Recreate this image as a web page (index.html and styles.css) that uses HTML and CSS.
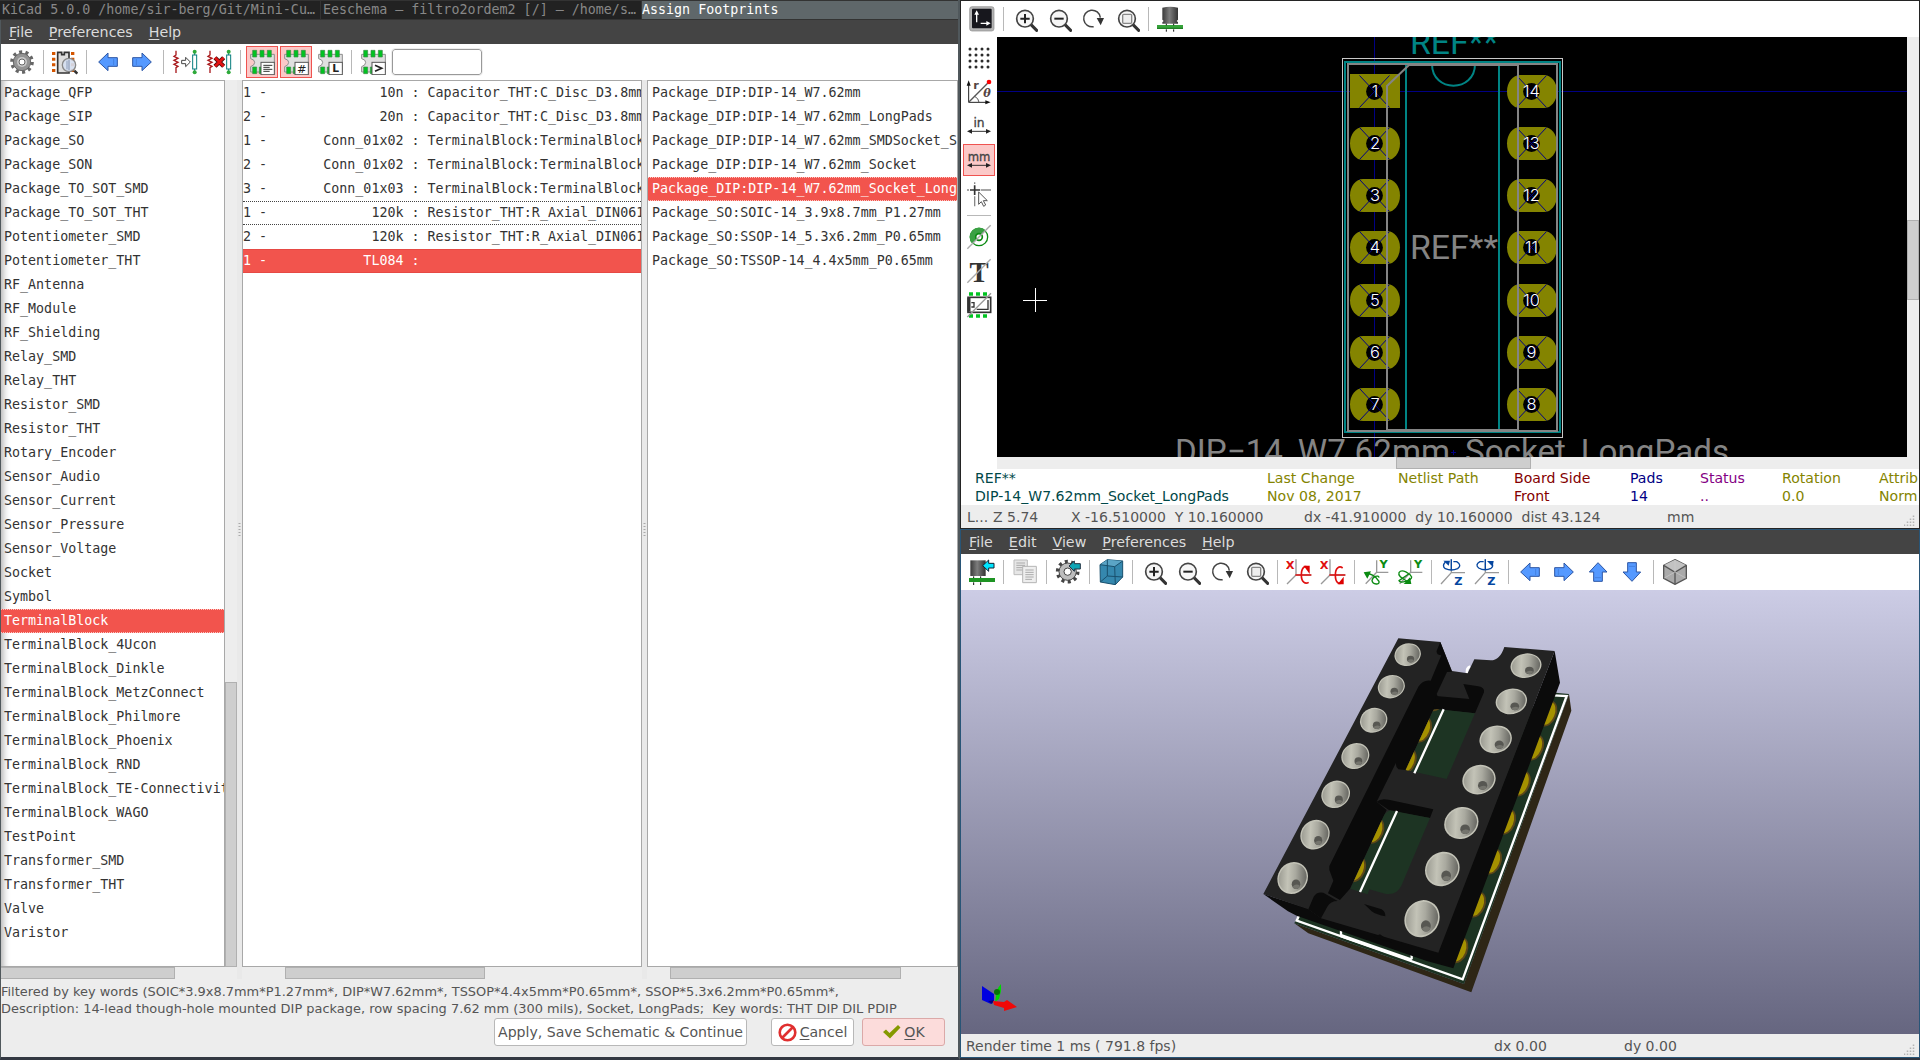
FILE: index.html
```html
<!DOCTYPE html>
<html lang="en">
<head>
<meta charset="utf-8">
<title>Assign Footprints</title>
<link rel="stylesheet" href="styles.css">
</head>
<body>
<svg class="defs" width="0" height="0">
  <defs>
    <symbol id="zoom-in" viewBox="156 19 78 78"><path d="M213 75L230 92" stroke="#333" stroke-width="9" stroke-linecap="round"/><circle cx="195" cy="57" r="25" fill="#f6f6f6" stroke="#444" stroke-width="5"/><path d="M195 43V71M181 57H209" stroke="#222" stroke-width="6"/></symbol>
    <symbol id="zoom-out" viewBox="156 19 78 78"><path d="M213 75L230 92" stroke="#333" stroke-width="9" stroke-linecap="round"/><circle cx="195" cy="57" r="25" fill="#f6f6f6" stroke="#444" stroke-width="5"/><path d="M181 57H209" stroke="#222" stroke-width="6"/></symbol>
    <symbol id="zoom-fit" viewBox="156 19 78 78"><path d="M213 75L230 92" stroke="#333" stroke-width="9" stroke-linecap="round"/><circle cx="195" cy="57" r="25" fill="#f6f6f6" stroke="#444" stroke-width="5"/><rect x="182" y="44" width="27" height="27" rx="3" fill="#eee" stroke="#888" stroke-width="4"/></symbol>
    <symbol id="redraw" viewBox="360 19 78 78"><path d="M401 81A25 25 0 1 1 421 54" fill="none" stroke="#444" stroke-width="4.5"/><path d="M410 55H432L422 77Z" fill="#333"/></symbol>
    <symbol id="arrow" viewBox="286 147 78 78"><path d="M297 186L325 159V173H353V199H325V212Z" fill="#59f" stroke="#2c56a5" stroke-width="3"/><path d="M342 177V195" stroke="#4480e0" stroke-width="3"/></symbol>
    <symbol id="board" viewBox="747 147 78 78">
      <path d="M752 163H823V216H752V200Q764 196 764 187Q764 179 752 176Z" fill="#e0e0e0" stroke="#8d8d8d" stroke-width="3"/>
      <path d="M758 151H770V171H758ZM780 151H792V171H780ZM802 151H814V171H802ZM758 201H770V221H758ZM778 201H790V221H778Z" fill="#00c321" stroke="#3f8a48" stroke-width="2"/>
      <rect x="783" y="187" width="40" height="37" fill="#fff" stroke="#555" stroke-width="3"/>
    </symbol>
    <symbol id="resistor" viewBox="516 147 78 78">
      <path d="M528 152V165L522 169L534 175L522 181L534 187L522 193L534 199L528 203V219" fill="none" stroke="#a8181b" stroke-width="4"/>
      <path d="M584 155V218" stroke="#067d7d" stroke-width="3"/><rect x="578" y="165" width="12" height="42" fill="#fff" stroke="#067d7d" stroke-width="3"/>
      <circle cx="584" cy="155" r="6" fill="#2faa3a"/><circle cx="584" cy="217" r="6" fill="#2faa3a"/>
    </symbol>
    <linearGradient id="cyl"><stop offset="0" stop-color="#3a3a3a"/><stop offset=".45" stop-color="#7d7d7d"/><stop offset="1" stop-color="#333"/></linearGradient>
    <symbol id="part3d" viewBox="591 19 78 78"><path d="M607 24Q630 18 654 24V60L650 64L654 68V72H607V68L611 64L607 60Z" fill="url(#cyl)"/><path d="M591 76H669V87H591Z" fill="#35a33a"/><path d="M591 86H669" stroke="#0f7214" stroke-width="3"/><path d="M619 72V77M641 72V77M619 89V96M641 89V96" stroke="#111" stroke-width="3"/></symbol>
    <linearGradient id="coneShade" x1="0" y1=".25" x2="1" y2=".7"><stop offset="0" stop-color="#96968d"/><stop offset=".35" stop-color="#c3c3b7"/><stop offset=".6" stop-color="#a9a99f"/><stop offset="1" stop-color="#62625d"/></linearGradient>
    <g id="cone"><ellipse rx="51" ry="45" transform="rotate(-25)" fill="#c3c3b7"/><ellipse rx="46.500" ry="40.500" transform="rotate(-25)" fill="url(#coneShade)"/><ellipse cx="11" cy="18" rx="14" ry="14" fill="#575752"/><path d="M-1 25A14 14 0 0 0 24 23Q12 14 -1 25Z" fill="#74746d"/></g>
    <g id="pad3d"><ellipse rx="28" ry="41" transform="rotate(22)" fill="#5d4719"/><ellipse rx="22" ry="36" transform="rotate(22)" fill="#a59100"/></g>
    <g id="pad"><rect x="-25" y="-16.5" width="50" height="33" rx="13" ry="16.5"/></g>
    <g id="padmark"><circle r="8.4" fill="#000"/><path d="M-15 -16L15 16M15 -16L-15 16" stroke="#000084"/></g>
  </defs>
</svg>
<div class="desktop">
  <section class="window assign">
    <div class="tabs"><div>KiCad 5.0.0 /home/sir-berg/Git/Mini-Cu…</div><div>Eeschema – filtro2ordem2 [/] – /home/s…</div><div class="active">Assign Footprints</div></div>
    <nav class="menubar"><span><u>F</u>ile</span><span><u>P</u>references</span><span><u>H</u>elp</span></nav>
    <div class="toolbar">
      <button><svg viewBox="27 147 78 78"><circle cx="66" cy="186" r="30" fill="none" stroke="#666" stroke-width="11" stroke-dasharray="9 9.85"/><circle cx="66" cy="186" r="26" fill="#949494" stroke="#666" stroke-width="3"/><circle cx="66" cy="186" r="15" fill="#c9c9c9"/><circle cx="66" cy="186" r="9" fill="#fff" stroke="#666" stroke-width="3"/></svg></button>
      <i></i>
      <button><svg viewBox="155 147 78 78"><path d="M160 156V216M217 156V216" stroke="#d45500" stroke-width="10" stroke-dasharray="9 8"/><path d="M172 157H184V164H192V157H206V219H172Z" fill="#ddd" stroke="#333" stroke-width="5"/><path d="M222 212L231 221" stroke="#333" stroke-width="8"/><circle cx="206" cy="195" r="20" fill="#d5dfef" fill-opacity=".9" stroke="#888" stroke-width="4"/><path d="M206 180V210M200 182V208" stroke="#8c9dba" stroke-width="3"/></svg></button>
      <i></i>
      <button><svg><use href="#arrow"/></svg></button>
      <button><svg class="flip"><use href="#arrow"/></svg></button>
      <i></i>
      <button><svg viewBox="516 147 78 78"><use href="#resistor" x="516" y="147" width="78" height="78"/><path d="M545 181H557V172L571 186L557 200V191H545Z" fill="#fff" stroke="#444" stroke-width="3"/></svg></button>
      <button><svg viewBox="516 147 78 78"><use href="#resistor" x="516" y="147" width="78" height="78"/><path d="M543 173L569 199M569 173L543 199" stroke="#520d0d" stroke-width="13"/><path d="M543 173L569 199M569 173L543 199" stroke="#e31313" stroke-width="8"/></svg></button>
      <i></i>
      <button class="on"><svg viewBox="747 147 78 78"><use href="#board" x="747" y="147" width="78" height="78"/><path d="M790 196H817M790 202H809M790 208H817M790 214H809" stroke="#333" stroke-width="3"/></svg></button>
      <button class="on"><svg viewBox="747 147 78 78"><use href="#board" x="747" y="147" width="78" height="78"/><text x="803" y="218" class="glyph">#</text></svg></button>
      <button><svg viewBox="747 147 78 78"><use href="#board" x="747" y="147" width="78" height="78"/><text x="803" y="217" class="glyph b">L</text></svg></button>
      <i></i>
      <button><svg viewBox="747 147 78 78"><use href="#board" x="747" y="147" width="78" height="78"/><path d="M792 196L812 205L792 214" fill="none" stroke="#222" stroke-width="5"/></svg></button>
      <input class="filter" aria-label="Filter">
    </div>
    <div class="panes">
      <div class="pane libs">
        <div class="list">
          <p>Package_QFP</p><p>Package_SIP</p><p>Package_SO</p><p>Package_SON</p><p>Package_TO_SOT_SMD</p><p>Package_TO_SOT_THT</p><p>Potentiometer_SMD</p><p>Potentiometer_THT</p><p>RF_Antenna</p><p>RF_Module</p><p>RF_Shielding</p><p>Relay_SMD</p><p>Relay_THT</p><p>Resistor_SMD</p><p>Resistor_THT</p><p>Rotary_Encoder</p><p>Sensor_Audio</p><p>Sensor_Current</p><p>Sensor_Pressure</p><p>Sensor_Voltage</p><p>Socket</p><p>Symbol</p><p class="sel dots">TerminalBlock</p><p>TerminalBlock_4Ucon</p><p>TerminalBlock_Dinkle</p><p>TerminalBlock_MetzConnect</p><p>TerminalBlock_Philmore</p><p>TerminalBlock_Phoenix</p><p>TerminalBlock_RND</p><p>TerminalBlock_TE-Connectivit</p><p>TerminalBlock_WAGO</p><p>TestPoint</p><p>Transformer_SMD</p><p>Transformer_THT</p><p>Valve</p><p>Varistor</p>
        </div>
        <div class="vscroll"><b></b></div>
        <div class="hscroll"><b></b></div>
      </div>
      <div class="sash"><svg width="3" height="14"><path d="M1.500 0V14" stroke="#aaa" stroke-width="2" stroke-dasharray="1 2"/></svg></div>
      <div class="pane parts">
        <div class="list">
          <p>1 -              10n : Capacitor_THT:C_Disc_D3.8mm</p><p>2 -              20n : Capacitor_THT:C_Disc_D3.8mm</p><p>1 -       Conn_01x02 : TerminalBlock:TerminalBlock</p><p>2 -       Conn_01x02 : TerminalBlock:TerminalBlock</p><p>3 -       Conn_01x03 : TerminalBlock:TerminalBlock</p><p class="dots">1 -             120k : Resistor_THT:R_Axial_DIN061</p><p>2 -             120k : Resistor_THT:R_Axial_DIN061</p><p class="sel">1 -            TL084 : </p>
        </div>
        <div class="hscroll"><b></b></div>
      </div>
      <div class="sash"><svg width="3" height="14"><path d="M1.500 0V14" stroke="#aaa" stroke-width="2" stroke-dasharray="1 2"/></svg></div>
      <div class="pane prints">
        <div class="list">
          <p>Package_DIP:DIP-14_W7.62mm</p><p>Package_DIP:DIP-14_W7.62mm_LongPads</p><p>Package_DIP:DIP-14_W7.62mm_SMDSocket_Sm</p><p>Package_DIP:DIP-14_W7.62mm_Socket</p><p class="sel dots">Package_DIP:DIP-14_W7.62mm_Socket_LongP</p><p>Package_SO:SOIC-14_3.9x8.7mm_P1.27mm</p><p>Package_SO:SSOP-14_5.3x6.2mm_P0.65mm</p><p>Package_SO:TSSOP-14_4.4x5mm_P0.65mm</p>
        </div>
        <div class="hscroll"><b></b></div>
      </div>
    </div>
    <div class="notes"><p>Filtered by key words (SOIC*3.9x8.7mm*P1.27mm*, DIP*W7.62mm*, TSSOP*4.4x5mm*P0.65mm*, SSOP*5.3x6.2mm*P0.65mm*,</p><p>Description: 14-lead though-hole mounted DIP package, row spacing 7.62 mm (300 mils), Socket, LongPads;&nbsp; Key words: THT DIP DIL PDIP</p></div>
    <div class="actions">
      <button class="apply">Apply, Save Schematic &amp; Continue</button>
      <button class="cancel"><svg width="19" height="19" viewBox="0 0 19 19"><circle cx="9.5" cy="9.5" r="7.8" fill="#fff" stroke="#e02f2f" stroke-width="2.6"/><path d="M4.5 14.5L14.5 4.5" stroke="#e02f2f" stroke-width="2.6"/></svg><span><u>C</u>ancel</span></button>
      <button class="ok"><svg width="19" height="16" viewBox="0 0 19 16"><path d="M1 8L4 5.5L7.5 9L16 1L18.5 3.5L8 14.5Z" fill="#859900"/></svg><span><u>O</u>K</span></button>
    </div>
  </section>

  <div class="right">
    <section class="window viewer">
      <div class="toolbar">
        <button><svg viewBox="27 19 78 78"><rect x="29" y="21" width="73" height="73" rx="7" fill="#b4b4b4" stroke="#8d8d8d" stroke-width="2"/><rect x="36" y="27" width="59" height="59" rx="3" fill="#17171d"/><path d="M50 68V42M62 71H82" stroke="#fff" stroke-width="4"/><path d="M43 45L50 32L57 45ZM79 64L92 71L79 78Z" fill="#fff"/></svg></button>
        <i></i>
        <button><svg><use href="#zoom-in"/></svg></button><button><svg><use href="#zoom-out"/></svg></button><button><svg><use href="#redraw"/></svg></button><button><svg><use href="#zoom-fit"/></svg></button>
        <i></i>
        <button><svg><use href="#part3d"/></svg></button>
      </div>
      <div class="work">
        <div class="sidebar">
          <button><svg viewBox="18 135 78 78"><path d="M30 147H90M30 165H90M30 183H90M30 201H90" stroke="#2b2b2b" stroke-width="9" stroke-linecap="round" stroke-dasharray="0 18"/></svg></button>
          <button><svg viewBox="18 237 78 78"><path d="M26 307V252M26 307H80" stroke="#222" stroke-width="3"/><path d="M20 257L26 241L32 257ZM76 301L92 307L76 313Z" fill="#111"/><path d="M26 307L86 247" stroke="#555" stroke-width="4"/><path d="M44 289Q56 295 57 307" fill="none" stroke="#555" stroke-width="3"/><circle cx="87" cy="246" r="7" fill="#f00"/><text x="48" y="266" class="glyph polar">r</text><text x="81" y="291" class="glyph theta">θ</text></svg></button>
          <button><svg viewBox="18 339 78 78"><text x="57" y="382" class="glyph unit">in</text><path d="M30 394H84" stroke="#333" stroke-width="3"/><path d="M21 394L36 387V401ZM93 394L78 387V401Z" fill="#222"/></svg></button>
          <button class="on"><svg viewBox="18 441 78 78"><text x="57" y="483" class="glyph unit" textLength="68" lengthAdjust="spacingAndGlyphs">mm</text><path d="M30 496H84" stroke="#333" stroke-width="3"/><path d="M21 496L36 489V503ZM93 496L78 489V503Z" fill="#222"/></svg></button>
          <button><svg viewBox="18 543 78 78"><path d="M21 570H27M62 570H93M44 547V552M44 589V619" stroke="#888" stroke-width="4"/><path d="M30 570H60M44 556V585" stroke="#333" stroke-width="5"/><path d="M56 576V613L64 605L71 619L77 615L70 602H82Z" fill="#fff" stroke="#555" stroke-width="3"/></svg></button>
          <i></i>
          <button><svg viewBox="18 672 78 78"><circle cx="57" cy="711" r="26" fill="#fff" stroke="#0b8a12" stroke-width="4"/><path d="M37 731A28 28 0 0 1 77 691Z" fill="#3aa043"/><circle cx="57" cy="711" r="10" fill="#fff" stroke="#0b8a12" stroke-width="5"/><path d="M22 746L92 676" stroke="#aaa" stroke-width="4"/></svg></button>
          <button><svg viewBox="18 774 78 78"><text x="57" y="846" class="glyph tee">T</text><path d="M22 848L92 778" stroke="#aaa" stroke-width="4"/></svg></button>
          <button><svg viewBox="18 876 78 78"><path d="M27 882H84M27 948H84" stroke="#00c321" stroke-width="11" stroke-dasharray="12 9"/><rect x="24" y="892" width="68" height="45" fill="#fff" stroke="#333" stroke-width="5"/><path d="M27 894V935" stroke="#333" stroke-width="9"/><path d="M34 908H42V921H34M84 900V928H50" fill="none" stroke="#333" stroke-width="4"/><path d="M22 951L93 880" stroke="#999" stroke-width="4"/></svg></button>
        </div>
        <div class="canvas-wrap">
          <svg class="pcb" viewBox="997 37 910 420">
            <path d="M997 91.5H1907M1374.5 37V457" stroke="#000084"/>
            <g fill="#848400"><path d="M1350 74H1400V108H1350Z"/>
              <use href="#pad" x="1375" y="143.5"/><use href="#pad" x="1375" y="195.5"/><use href="#pad" x="1375" y="247.5"/><use href="#pad" x="1375" y="300.5"/><use href="#pad" x="1375" y="352.5"/><use href="#pad" x="1375" y="404.5"/>
              <use href="#pad" x="1532" y="91.5"/><use href="#pad" x="1532" y="143.5"/><use href="#pad" x="1532" y="195.5"/><use href="#pad" x="1532" y="247.5"/><use href="#pad" x="1532" y="300.5"/><use href="#pad" x="1532" y="352.5"/><use href="#pad" x="1532" y="404.5"/></g>
            <use href="#padmark" x="1374.5" y="91.5"/><use href="#padmark" x="1374.5" y="143.5"/><use href="#padmark" x="1374.5" y="195.5"/><use href="#padmark" x="1374.5" y="247.5"/><use href="#padmark" x="1374.5" y="300.5"/><use href="#padmark" x="1374.5" y="352.5"/><use href="#padmark" x="1374.5" y="404.5"/>
            <use href="#padmark" x="1531.5" y="91.5"/><use href="#padmark" x="1531.5" y="143.5"/><use href="#padmark" x="1531.5" y="195.5"/><use href="#padmark" x="1531.5" y="247.5"/><use href="#padmark" x="1531.5" y="300.5"/><use href="#padmark" x="1531.5" y="352.5"/><use href="#padmark" x="1531.5" y="404.5"/>
            <rect x="1342.5" y="58.5" width="220" height="379" fill="none" stroke="#c8c8c8"/>
            <g fill="none" stroke="#008484" stroke-width="2"><path d="M1345 62H1560V432H1345ZM1406 65V429M1499 65V429M1432 64C1432 93 1475 93 1475 64"/></g>
            <g fill="none" stroke="#848484" stroke-width="2"><path d="M1348 64H1557V431H1348ZM1387 430V86L1409 65H1518V430Z"/></g>
            <g class="stroke-text"><text x="1410" y="259" textLength="88" lengthAdjust="spacingAndGlyphs">REF**</text><text x="1410" y="54" class="teal" textLength="88" lengthAdjust="spacingAndGlyphs">REF**</text><text x="1175" y="463" textLength="554" lengthAdjust="spacingAndGlyphs">DIP−14_W7.62mm_Socket_LongPads</text></g>
            <g class="pad-text"><text x="1375" y="97">1</text><text x="1375" y="149">2</text><text x="1375" y="201">3</text><text x="1375" y="253">4</text><text x="1375" y="306">5</text><text x="1375" y="358">6</text><text x="1375" y="410">7</text><text x="1531.5" y="410">8</text><text x="1531.5" y="358">9</text><text x="1531.5" y="306">10</text><text x="1531.5" y="253">11</text><text x="1531.5" y="201">12</text><text x="1531.5" y="149">13</text><text x="1531.5" y="97">14</text></g>
            <path d="M1023 300.5H1047M1035.5 288V312" stroke="#fff"/><path d="M1451 452.5H1456M1453.5 450V455" stroke="#000084"/>
          </svg>
          <div class="vscroll"><b></b></div>
          <div class="hscroll"><b></b></div>
        </div>
      </div>
      <dl class="message">
        <div class="dk"><dt>REF**</dt><dd>DIP-14_W7.62mm_Socket_LongPads</dd></div><div><dt>Last Change</dt><dd>Nov 08, 2017</dd></div><div><dt>Netlist Path</dt></div><div class="rd"><dt>Board Side</dt><dd>Front</dd></div><div class="bl"><dt>Pads</dt><dd>14</dd></div><div class="mg"><dt>Status</dt><dd>..</dd></div><div><dt>Rotation</dt><dd>0.0</dd></div><div><dt>Attrib</dt><dd>Norm</dd></div>
      </dl>
      <footer class="status coords"><span>L...</span><span>Z 5.74</span><span>X -16.510000&nbsp; Y 10.160000</span><span>dx -41.910000&nbsp; dy 10.160000&nbsp; dist 43.124</span><span>mm</span><svg class="grip" width="12" height="12"><use href="#grip"/></svg></footer>
    </section>

    <section class="window view3d">
      <nav class="menubar"><span><u>F</u>ile</span><span><u>E</u>dit</span><span><u>V</u>iew</span><span><u>P</u>references</span><span><u>H</u>elp</span></nav>
      <div class="toolbar">
        <button><svg viewBox="27 387 78 78"><path d="M31 391H77V438H31Z" fill="url(#cyl)"/><path d="M27 444H105V456H27Z" fill="#1e9423"/><path d="M41 439V444M62 439V444M41 457V465M62 457V465" stroke="#111" stroke-width="3"/><path d="M68 407L86 390V400H102V414H86V424Z" fill="#00e5ff" stroke="#123" stroke-width="3"/></svg></button>
        <i></i>
        <button><svg viewBox="156 387 78 78"><path d="M162 390H202V434H162Z" fill="#e6e6e6" stroke="#bbb" stroke-width="3"/><path d="M169 399H195M169 406H195M169 413H195M169 420H190" stroke="#aaa" stroke-width="3"/><path d="M188 409H229V458H188Z" fill="#eee" stroke="#b5b5b5" stroke-width="3"/><path d="M196 420H221M196 427H221M196 434H221M196 441H221M196 448H216" stroke="#aaa" stroke-width="3"/></svg></button>
        <i></i>
        <button><svg viewBox="285 387 78 78"><circle cx="323" cy="425" r="30" fill="none" stroke="#444" stroke-width="11" stroke-dasharray="9 9.85"/><circle cx="323" cy="425" r="26" fill="#bdbdbd" stroke="#444" stroke-width="3"/><circle cx="323" cy="425" r="11" fill="#fff" stroke="#444" stroke-width="3"/><path d="M327 408L343 393V401H361V417H343V424Z" fill="#0fa5b5" stroke="#234" stroke-width="3"/></svg></button>
        <i></i>
        <button><svg viewBox="414 387 78 78"><path d="M420 404L442 389L488 393V441L466 464L421 456Z" fill="#3588ae" stroke="#19506d" stroke-width="3"/><path d="M420 404L464 410L488 393L442 389Z" fill="#5ba5c6"/><path d="M420 404L464 410L488 393M464 410L466 464M442 389V438L421 456M442 438L488 441" fill="none" stroke="#19506d" stroke-width="3"/></svg></button>
        <i></i>
        <button><svg><use href="#zoom-in"/></svg></button><button><svg><use href="#zoom-out"/></svg></button><button><svg><use href="#redraw"/></svg></button><button><svg><use href="#zoom-fit"/></svg></button>
        <i></i>
        <button><svg viewBox="978 387 78 78"><path d="M1008 388V435H1054M1008 435L981 462" fill="none" stroke="#999" stroke-width="4"/><text x="990" y="418" class="glyph axis red">X</text><path d="M1006 435H1054M1046 457C1036 464 1024 456 1024 435C1024 414 1034 404 1044 413" fill="none" stroke="#e01010" stroke-width="5"/><path d="M1031 407H1049V432Z" fill="#d00"/></svg></button>
        <button><svg viewBox="978 387 78 78"><path d="M1008 388V435H1054M1008 435L981 462" fill="none" stroke="#999" stroke-width="4"/><text x="990" y="418" class="glyph axis red">X</text><path d="M1006 435H1054M1046 414C1036 406 1024 414 1024 435C1024 456 1034 466 1044 457" fill="none" stroke="#e01010" stroke-width="5"/><path d="M1031 463H1049V440Z" fill="#d00"/></svg></button>
        <i></i>
        <button><svg viewBox="1209 387 78 78"><path d="M1250 391V427H1285M1250 427L1217 461" fill="none" stroke="#999" stroke-width="4"/><text x="1271" y="415" class="glyph axis green">Y</text><path d="M1216 432C1226 426 1250 440 1257 454C1260 466 1238 464 1236 452C1238 438 1256 434 1257 443" fill="none" stroke="#0b8b12" stroke-width="4"/><path d="M1211 427L1233 424L1222 446Z" fill="#0b8b12"/></svg></button>
        <button><svg viewBox="1311 387 78 78"><path d="M1352 391V427H1387M1352 427L1319 461" fill="none" stroke="#999" stroke-width="4"/><text x="1374" y="415" class="glyph axis green">Y</text><path d="M1348 458C1334 448 1312 440 1317 428C1326 414 1350 432 1355 441C1355 452 1318 462 1317 452L1346 432" fill="none" stroke="#0b8b12" stroke-width="4"/><path d="M1331 462L1354 462L1350 442Z" fill="#0b8b12"/></svg></button>
        <i></i>
        <button><svg viewBox="0 387 78 78"><path d="M34 388V428H75M34 428L3 462" fill="none" stroke="#999" stroke-width="4"/><path d="M34 388V420" stroke="#0546a0" stroke-width="4"/><text x="55" y="464" class="glyph axis blue">Z</text><path d="M16 396Q5 408 16 416Q34 424 53 416Q67 406 50 395H40" fill="none" stroke="#0546a0" stroke-width="4"/><path d="M10 392H30L26 407Z" fill="#0546a0"/></svg></button>
        <button><svg viewBox="102 387 78 78"><path d="M136 388V428H177M136 428L105 462" fill="none" stroke="#999" stroke-width="4"/><path d="M136 388V420" stroke="#0546a0" stroke-width="4"/><text x="154" y="464" class="glyph axis blue">Z</text><path d="M131 395H120Q104 404 116 414Q134 424 153 415Q162 408 155 400" fill="none" stroke="#0546a0" stroke-width="4"/><path d="M141 393H161L158 410Z" fill="#0546a0"/></svg></button>
        <i></i>
        <button><svg><use href="#arrow"/></svg></button><button><svg class="flip"><use href="#arrow"/></svg></button><button><svg class="up"><use href="#arrow"/></svg></button><button><svg class="down"><use href="#arrow"/></svg></button>
        <i></i>
        <button><svg viewBox="666 387 78 78"><path d="M705 389L739 406V445L705 463L671 445V406Z" fill="#aaa" stroke="#555" stroke-width="4"/><path d="M705 389L739 406L705 427L671 406Z" fill="#c2c2c2"/><path d="M671 406L705 427L739 406M705 427V463" fill="none" stroke="#555" stroke-width="4"/><path d="M705 391V426L673 444M705 426L737 444" fill="none" stroke="#ccc" stroke-width="2"/></svg></button>
      </div>
      <svg class="scene" viewBox="961 590 958 444">
        <defs><g id="grip"><path d="M9.500 .5V12M6.500 3.500V12M3.500 6.500V12M.5 9.500V12" stroke="#b4b4b4" stroke-width="1.500" stroke-dasharray="1.500 1.500"/></g></defs>
        <g transform="translate(1240 620) scale(.33333)">
          <path d="M987 222L994 272L694 1117L205 940L163 910L672 1092Z" fill="#2e2616"/>
          <path d="M930 217L987 222L672 1092L163 910L178 880Z" fill="#1c3322"/>
          <use href="#pad3d" x="922" y="280"/><use href="#pad3d" x="882" y="382"/><use href="#pad3d" x="842" y="490"/><use href="#pad3d" x="798" y="605"/><use href="#pad3d" x="756" y="724"/><use href="#pad3d" x="708" y="853"/><use href="#pad3d" x="655" y="990"/>
          <path d="M940 226L980 228L668 1078L170 902L178 884M303 945V930M515 1018V1003" fill="none" stroke="#fff" stroke-width="7"/><path d="M303 947L515 1020" stroke="#fff" stroke-width="10"/>
          <path d="M681 160Q679 143 691 140" fill="none" stroke="#fff" stroke-width="8"/>
          <path d="M944 93L960 188L640 1045L560 1023L170 887L144 874L70 822L595 990Z" fill="#0b0b0b"/>
          <path d="M475 55L601 66L636 153L683 160L703 118L752 121Q780 121 793 81L944 93L595 998L243 895L205 868L70 822Z" fill="#232323"/>
          <path d="M601 66L636 155L621 156L590 222L598 240L580 270L497 450L475 448Q466 440 468 428L410 545L440 570L330 806L300 840L264 820L280 782L268 750L268 738L535 200Q550 178 572 182L604 106Q588 105 590 92Z" fill="#0a0a0a"/>
          <path d="M588 228L688 237L670 192L715 199Q735 203 732 217L705 280L580 267Z" fill="#0a0a0a"/>
          <path d="M590 267L705 280L620 477L497 450L580 270Z" fill="#1d3423"/>
          <path d="M410 545Q422 533 450 540L580 568L570 594L450 572Z" fill="#0a0a0a"/>
          <path d="M450 571L570 594L485 795Q470 828 435 821L388 808L383 823L331 806L430 590Q438 575 450 571Z" fill="#1d3423"/>
          <clipPath id="holes"><path d="M590 267L705 280L620 477L497 450L580 270ZM450 571L570 594L485 795L383 823L331 806L430 590Z"/></clipPath>
          <g clip-path="url(#holes)"><use href="#pad3d" x="589" y="234"/><use href="#pad3d" x="546" y="328"/><use href="#pad3d" x="500" y="423"/><use href="#pad3d" x="403" y="632"/><use href="#pad3d" x="348" y="747"/></g>
          <path d="M611 268L523 460M471 573L360 816" stroke="#fff" stroke-width="7"/>
          <path d="M205 868L221 830Q230 814 250 818L293 843Q271 843 262 860L243 895ZM372 852L425 868Q437 876 436 889Q410 885 395 874ZM420 943L455 968L400 950Z" fill="#0b0b0b"/>
          <g id="cones">
            <use href="#cone" transform="translate(503 104) scale(.79 .74)"/><use href="#cone" transform="translate(454 200) scale(.81 .76)"/><use href="#cone" transform="translate(401 301) scale(.82 .81)"/><use href="#cone" transform="translate(346 408) scale(.84 .85)"/><use href="#cone" transform="translate(287 523) scale(.86 .89)"/><use href="#cone" transform="translate(225 644) scale(.88 .97)"/><use href="#cone" transform="translate(158 774) scale(.92 1.04)"/>
            <use href="#cone" transform="translate(858 137) scale(.93 .8)"/><use href="#cone" transform="translate(814 244) scale(.94 .84)"/><use href="#cone" transform="translate(767 358) scale(.97 .9)"/><use href="#cone" transform="translate(717 479) scale(1 .96)"/><use href="#cone" transform="translate(664 609) scale(1.03 1.04)"/><use href="#cone" transform="translate(607 747) scale(1.04 1.12)"/><use href="#cone" transform="translate(546 896) scale(1.06 1.21)"/>
          </g>
        </g>
        <path d="M995 1002L997 991L998 988L1001 984L1001 991L999 999Z" fill="#00d800"/><circle cx="997" cy="992" r="3" fill="#087408"/>
        <path d="M982 986L994 994L994 1000L991 1004L982 1000Z" fill="#0000e0"/><path d="M988 1001L994 1000L992 1004Z" fill="#000080"/>
        <path d="M993 1001L1004 1002L1007 1000L1017 1007L1004 1011L1004 1008L994 1005Z" fill="#f00808"/>
      </svg>
      <footer class="status render"><span>Render time 1 ms ( 791.8 fps)</span><span>dx 0.00</span><span>dy 0.00</span><svg class="grip" width="12" height="12"><use href="#grip"/></svg></footer>
    </section>
  </div>
</div>
</body>
</html>
```
FILE: styles.css
```css
* { box-sizing: border-box; margin: 0; padding: 0; }
body { width: 1920px; height: 1060px; overflow: hidden; background: #2f343f; font: 14px/18px "DejaVu Sans", sans-serif; color: #555; }
.defs { display: block; height: 0; }
.desktop { display: flex; height: 1060px; }
.window { display: flex; flex-direction: column; background: #ededed; }
.assign { width: 960px; height: 1060px; border: solid #50585c; border-width: 0 2px 3px 1px; border-bottom-color: #333842; }
.right { width: 960px; display: flex; flex-direction: column; }
.viewer { height: 529px; border: 1px solid #242424; }
.view3d { height: 529px; border: 1px solid #285577; margin-bottom: 2px; }

.tabs { display: flex; height: 20px; margin-left: -1px; padding: 1px 0; gap: 1px; background: #333; font: 13.333px/17px "DejaVu Sans Mono", monospace; color: #888; white-space: pre; }
.tabs div { width: 320px; padding-left: 2px; background: #222; overflow: hidden; }
.tabs .active { flex: 1; background: #5f676a; color: #fff; padding-left: 0; }
.menubar { display: flex; gap: 16px; height: 24px; padding-left: 8px; background: #444; color: #dcdcdc; font-size: 14.25px; line-height: 24px; }
u { text-underline-offset: 2px; text-decoration-thickness: 1px; }

.toolbar { display: flex; align-items: center; height: 36px; padding-left: 4px; background: #fff; }
.toolbar button, .sidebar button { width: 32px; height: 32px; margin: 1px; padding: 2px; border: 1px solid transparent; background: none; display: flex; flex: none; }
.toolbar .on, .sidebar .on { border-color: #ef5350; background: #fbc9c8; }
.toolbar button svg, .sidebar button svg { width: 26px; height: 26px; }
.toolbar i { flex: none; width: 1px; height: 24px; margin: 0 4px; background: #b8b8b8; }
.flip { transform: scaleX(-1); }
.up { transform: rotate(90deg); }
.down { transform: rotate(-90deg); }
.filter { width: 90px; height: 26px; margin-left: 2px; border: 1px solid #999; border-radius: 3px; outline: 1px solid #eee; background: #fff; }
.glyph { font: 34px "DejaVu Sans", sans-serif; text-anchor: middle; fill: #222; }
.glyph.b { font-size: 32px; font-weight: bold; }
.glyph.polar { font-size: 34px; font-weight: bold; fill: #544; }
.glyph.theta { font: italic bold 34px "DejaVu Serif", serif; fill: #544; }
.glyph.unit { font-size: 37px; fill: #444; stroke: #444; }
.glyph.tee { font: bold 86px "Liberation Serif", serif; fill: #333; }
.glyph.axis { font-size: 34px; font-weight: bold; }
.glyph.red { fill: #e01010; }
.glyph.green { fill: #0b8b12; }
.glyph.blue { fill: #0546a0; }

.panes { display: flex; height: 899px; }
.pane { display: grid; grid-template-rows: 887px 12px; grid-template-columns: minmax(0, 1fr) auto; }
.libs { width: 236px; }
.parts { width: 400px; }
.prints { width: 310px; flex: 1; }
.list { border: 1px solid #a8a8a8; background: #fff; color: #333; overflow: hidden; font: 13.333px/24px "DejaVu Sans Mono", monospace; }
.libs .list { border-left: 0; box-shadow: inset 8px 0 7px -6px #aaa; }
.list p { height: 24px; white-space: pre; }
.libs p { padding-left: 3px; }
.prints p { padding-left: 4px; }
.list .sel { background: #f2544d; color: #fff; box-shadow: inset 0 1px #e64944, inset 0 -1px #e64944; }
.list .dots { line-height: 22px; border: dotted #444; border-width: 1px 0; }
.list .sel.dots { border-color: #ffc4c0; box-shadow: none; }
.vscroll { width: 12px; background: #ededed; }
.vscroll b, .hscroll b { display: block; background: #cecece; border: 1px solid #b0b0b0; }
.hscroll { grid-column: 1; background: #ededed; }
.hscroll b { height: 12px; }
.libs .vscroll b { margin-top: 602px; height: 285px; }
.libs .hscroll b { width: 174px; border-left: 0; }
.parts .hscroll b { margin-left: 43px; width: 200px; }
.prints .hscroll b { margin-left: 23px; width: 231px; }
.sash { width: 5px; background: #e9e9e9; display: flex; align-items: center; justify-content: center; }

.notes { height: 38px; padding-top: 4px; font-size: 12.95px; line-height: 17px; white-space: nowrap; }
.actions { display: flex; height: 40px; padding: 1px 13px 0 0; justify-content: flex-end; }
.actions button { display: flex; align-items: center; justify-content: center; gap: 3px; height: 28px; border: 1px solid #b8b8b8; border-radius: 3px; background: #fff; color: #555; font: 14.1px "DejaVu Sans", sans-serif; white-space: nowrap; }
.actions .apply { width: 253px; margin-right: 24px; }
.actions .cancel { width: 83px; margin-right: 8px; }
.actions .ok { width: 83px; background: #fcdcdb; border-color: #dba9a8; }

.work { display: flex; height: 432px; }
.sidebar { width: 36px; padding-top: 4px; background: #fff; display: flex; flex-direction: column; align-items: center; }
.sidebar i { flex: none; width: 24px; height: 1px; margin: 4px 0; background: #b8b8b8; }
.canvas-wrap { flex: 1; display: grid; grid-template-columns: 910px 12px; grid-template-rows: 420px 12px; }
.pcb { width: 910px; height: 420px; background: #000; }
.canvas-wrap .vscroll b { margin-top: 183px; height: 80px; }
.canvas-wrap .hscroll b { margin-left: 399px; width: 135px; }
.stroke-text { font: 400 33.5px "Roboto", sans-serif; fill: #848484; }
.stroke-text .teal { fill: #008484; }
.pad-text { font: 300 16.5px "Inter", sans-serif; fill: #fff; text-anchor: middle; }
.message { display: grid; grid-template-columns: 292px 131px 116px 116px 70px 82px 97px 1fr; height: 36px; padding-left: 14px; background: #fff; color: #848400; font-size: 14.08px; white-space: nowrap; overflow: hidden; }
.message .dk { color: #004848; }
.message .rd { color: #840000; }
.message .bl { color: #000084; }
.message .mg { color: #840084; }
.status { display: grid; height: 23px; line-height: 24px; white-space: nowrap; background: #ededed; }
.coords { grid-template-columns: 26px 78px 233px 363px 1fr 15px; padding-left: 6px; }
.render { grid-template-columns: 528px 130px 1fr 15px; padding-left: 5px; }
.grip { align-self: end; margin-bottom: 2px; }
.scene { width: 958px; height: 444px; background: linear-gradient(#cccce5, #666680); }
```
